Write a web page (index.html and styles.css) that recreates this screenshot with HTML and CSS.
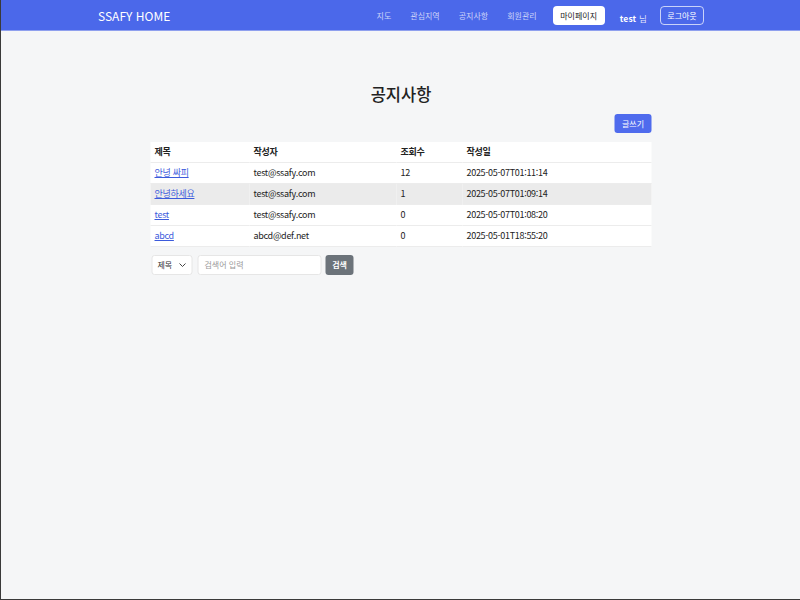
FILE: index.html
```html
<!DOCTYPE html>
<html lang="ko">
<head>
<meta charset="utf-8">
<title>SSAFY HOME</title>
<link rel="stylesheet" href="styles.css">
</head>
<body>
<div class="frame">
  <nav class="navbar">
    <div class="brand">SSAFY HOME</div>
    <div class="menu">
      <a class="nav-link">지도</a>
      <a class="nav-link">관심지역</a>
      <a class="nav-link">공지사항</a>
      <a class="nav-link">회원관리</a>
      <a class="btn-mypage">마이페이지</a>
      <span class="user"><b>test</b> 님</span>
      <a class="btn-logout">로그아웃</a>
    </div>
  </nav>
  <main class="container">
    <h1 class="title">공지사항</h1>
    <div class="actions"><button class="btn-write">글쓰기</button></div>
    <table class="board">
      <thead>
        <tr><th class="c1">제목</th><th class="c2">작성자</th><th class="c3">조회수</th><th>작성일</th></tr>
      </thead>
      <tbody>
        <tr><td><a class="post">안녕 싸피</a></td><td>test@ssafy.com</td><td>12</td><td>2025-05-07T01:11:14</td></tr>
        <tr class="hover"><td><a class="post">안녕하세요</a></td><td>test@ssafy.com</td><td>1</td><td>2025-05-07T01:09:14</td></tr>
        <tr><td><a class="post">test</a></td><td>test@ssafy.com</td><td>0</td><td>2025-05-07T01:08:20</td></tr>
        <tr><td><a class="post">abcd</a></td><td>abcd@def.net</td><td>0</td><td>2025-05-01T18:55:20</td></tr>
      </tbody>
    </table>
    <div class="search">
      <div class="select">제목
        <svg class="chev" width="8" height="6" viewBox="0 0 8 6"><path d="M1 1.5 L4 4.5 L7 1.5" fill="none" stroke="#444" stroke-width="1"/></svg>
      </div>
      <div class="input">검색어 입력</div>
      <button class="btn-search">검색</button>
    </div>
  </main>
</div>
</body>
</html>
```
FILE: styles.css
```css
* { box-sizing: border-box; }
html, body { margin: 0; padding: 0; }
body {
  font-family: "Noto Sans CJK KR", "Noto Sans", sans-serif;
  background: #f5f6f7;
  color: #222;
}
.frame {
  width: 800px;
  height: 600px;
  border-left: 1px solid #3a3a3a;
  border-bottom: 1px solid #3a3a3a;
  overflow: hidden;
}
.navbar {
  height: 31px;
  background: #4b68ea;
  display: flex;
  align-items: center;
  justify-content: space-between;
  padding: 0 96px 0 97px;
  border-bottom: 1px solid #8fa0ee;
}
.brand {
  color: #fff;
  font-size: 12px;
}
.menu {
  display: flex;
  align-items: center;
  font-size: 8px;
}
.nav-link {
  color: rgba(255,255,255,0.72);
  margin-right: 19px;
}
.btn-mypage {
  background: #fff;
  color: #222;
  border-radius: 4px;
  height: 19px;
  width: 52px;
  display: flex;
  align-items: center;
  justify-content: center;
  margin-left: -3px;
  margin-right: 15px;
}
.user {
  color: rgba(255,255,255,0.85);
  align-self: flex-start;
  margin-top: 6px;
  margin-right: 13px;
  font-size: 8.5px;
  letter-spacing: 0.2px;
}
.user b { color: #fff; font-weight: 700; }
.btn-logout {
  color: #fff;
  border: 1px solid rgba(255,255,255,0.7);
  border-radius: 4px;
  height: 19px;
  width: 44px;
  display: flex;
  align-items: center;
  justify-content: center;
}
.container {
  width: 501px;
  margin: 0 auto;
  padding-top: 50px;
  transform: translateX(0.5px);
}
.title {
  margin: 0;
  text-align: center;
  font-size: 16.5px;
  font-weight: 500;
  line-height: 26px;
  color: #222;
}
.actions {
  display: flex;
  justify-content: flex-end;
  margin-top: 7px;
}
.btn-write {
  font-family: inherit;
  border: 0;
  background: #4f6bed;
  color: #fff;
  font-size: 8px;
  height: 19px;
  width: 37px;
  border-radius: 3px;
  padding: 0;
}
.board {
  width: 100%;
  margin-top: 9px;
  border-collapse: collapse;
  background: #fff;
  font-size: 9px;
  letter-spacing: -0.3px;
}
.board th, .board td {
  text-align: left;
  padding: 0 5px 0 4px;
  height: 21px;
  border-bottom: 1px solid #ececec;
  font-weight: 400;
}
.board th { font-weight: 700; height: 20px; }
.c1 { width: 99px; }
.c2 { width: 147px; }
.c3 { width: 66px; }
.board tr.hover td { background: #ebebeb; }
.post {
  color: #3c5bdc;
  text-decoration: underline;
}
.search {
  display: flex;
  align-items: center;
  margin-top: 8px;
  font-size: 8px;
}
.select {
  width: 41px;
  height: 20px;
  margin-left: 1px;
  background: #fff;
  border: 1px solid #e6e6e6;
  border-radius: 3px;
  display: flex;
  align-items: center;
  padding-left: 5px;
  gap: 6px;
  color: #333;
}
.input {
  width: 124px;
  height: 20px;
  margin-left: 5px;
  background: #fff;
  border: 1px solid #e6e6e6;
  border-radius: 3px;
  display: flex;
  align-items: center;
  padding-left: 6px;
  color: #999;
}
.btn-search {
  font-family: inherit;
  margin-left: 4px;
  width: 28px;
  height: 20px;
  border: 0;
  border-radius: 3px;
  background: #6c737a;
  color: #fff;
  font-size: 8px;
  font-weight: 700;
  padding: 0;
}
```
